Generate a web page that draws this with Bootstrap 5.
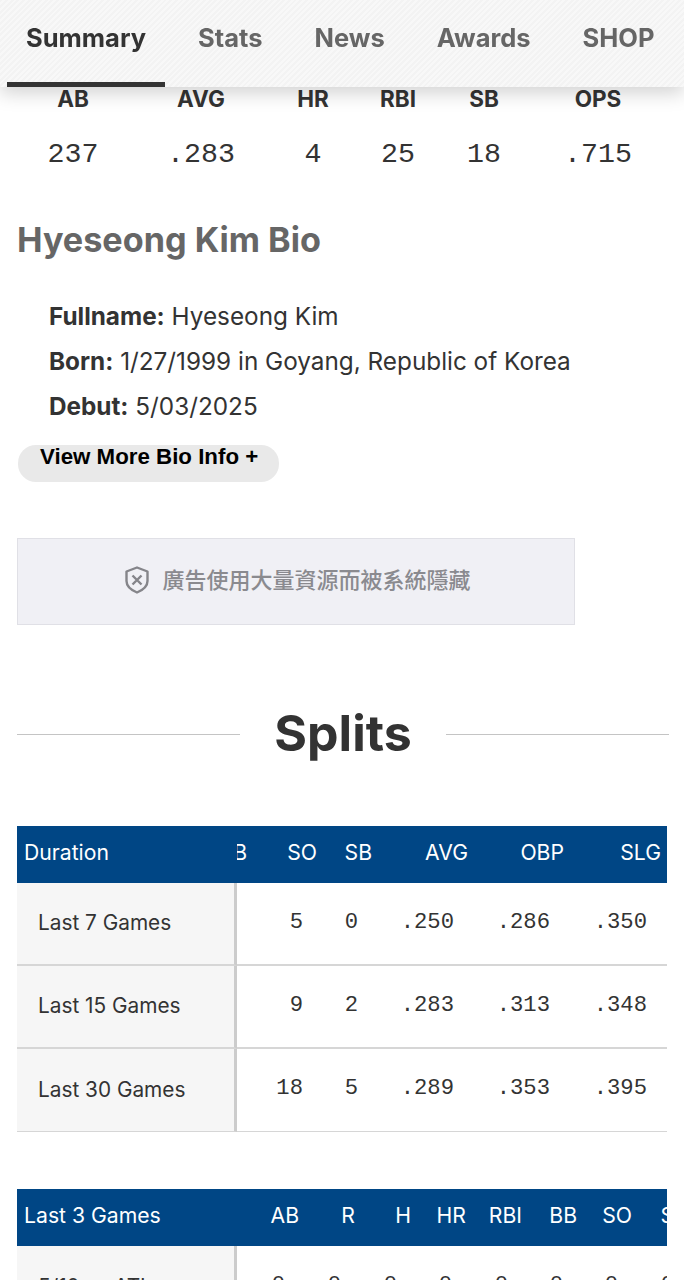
<!DOCTYPE html>
<html lang="en">
<head>
    <meta charset="UTF-8" />
    <meta name="viewport" content="width=device-width, initial-scale=1.0" />
    <title>Hyeseong Kim</title>
    <link href="https://cdn.jsdelivr.net/npm/bootstrap@5.3.3/dist/css/bootstrap.min.css" rel="stylesheet">
    <style>
        body {
            font-family: Inter, "Liberation Sans", sans-serif;
            color: #333;
            background: #fff;
            height: 1280px;
            overflow: hidden;
        }

        .top-tabs {
            position: sticky;
            top: 0;
            z-index: 5;
            height: 87px;
            padding-left: 7px;
            background: repeating-linear-gradient(135deg, #f3f3f3 0 2px, #f8f8f8 2px 4px);
            box-shadow: 0 6px 18px rgba(0, 0, 0, .18);
            overflow: hidden;
        }

        .top-tab {
            display: block;
            height: 87px;
            padding: 22px 19px 0;
            margin-right: 14px;
            font-size: 25.5px;
            line-height: 32px;
            font-weight: 700;
            color: #666;
            text-decoration: none;
            white-space: nowrap;
        }

        .top-tab.on {
            color: #333;
            border-bottom: 5px solid #333;
        }

        .stat-line {
            display: grid;
            grid-template-columns: 146px 110px 114px 56px 116px 112px;
            text-align: center;
        }

        .stat-line .hd {
            font-size: 22.5px;
            line-height: 26px;
            font-weight: 700;
            margin-top: -1px;
        }

        .stat-line .vl {
            font-family: "Liberation Mono", monospace;
            font-size: 28.3px;
            line-height: 32px;
            padding-top: 26px;
        }

        .bio-title {
            font-size: 34.2px;
            line-height: 40px;
            font-weight: 700;
            color: #666;
            margin: 50px 0 0 17px;
        }

        .bio-list {
            margin: 34px 0 0 49px;
            font-size: 24.3px;
            line-height: 45px;
        }

        .more-bio {
            width: 261px;
            height: 37px;
            margin: 16px 0 0 18px;
            padding: 0 0 14px 22px;
            border: 0;
            border-radius: 18px;
            background: #e9e9e9;
            color: #000;
            font-family: "Liberation Sans", sans-serif;
            font-size: 22.3px;
            line-height: 24px;
            font-weight: 700;
            text-align: left;
            display: block;
        }

        .ad-box {
            width: 558px;
            height: 87px;
            margin: 56px 0 0 17px;
            padding: 0 0 4px 4px;
            border: 1px solid #e0e0e6;
            background: #f0f0f5;
            color: #8a8a8f;
            font-family: "Noto Sans CJK TC", sans-serif;
            font-size: 22px;
            font-weight: 500;
            gap: 13px;
        }

        .ad-box span {
            margin-top: -2px;
        }

        .splits-head {
            margin: 72px 15px 0 17px;
            gap: 34px;
            font-size: 50px;
            line-height: 72px;
            font-weight: 700;
        }

        .splits-head hr {
            flex: 1;
            margin: 2px 0 0;
            opacity: 1;
            border-top: 1px solid #c4c4c4;
        }

        .scroll-box {
            margin: 0 17px;
            overflow-x: auto;
            scrollbar-width: none;
        }

        .stat-table {
            table-layout: fixed;
            border-collapse: separate;
            border-spacing: 0;
            font-size: 21.2px;
        }

        .splits-table {
            width: 694px;
        }

        .games-table {
            width: 677px;
        }

        .c220 { width: 220px; }
        .c55 { width: 55px; }
        .c56 { width: 56px; }
        .c60 { width: 60px; }
        .c68 { width: 68px; }
        .c70 { width: 70px; }
        .c96 { width: 96px; }
        .c97 { width: 97px; }

        .stat-table th {
            height: 57px;
            padding: 0 6px 4px 0;
            background: #004685;
            color: #fff;
            font-weight: 400;
            text-align: right;
            white-space: nowrap;
        }

        .stat-table td {
            height: 83px;
            padding: 0 20px 2px 0;
            font-family: "Liberation Mono", monospace;
            font-size: 22.2px;
            text-align: right;
            white-space: nowrap;
            border-bottom: 2px solid #d6d6d6;
        }

        .stat-table tr:last-child td {
            border-bottom-width: 1px;
        }

        .stat-table .fix-col {
            position: sticky;
            left: 0;
            z-index: 2;
            text-align: left;
        }

        .stat-table th.fix-col {
            padding-left: 7px;
        }

        .stat-table td.fix-col {
            padding: 0 0 1px 21px;
            background: #f6f6f6;
            border-right: 3px solid #ccc;
            font-family: Inter, "Liberation Sans", sans-serif;
            font-size: 20.8px;
        }

        .first-table {
            margin-top: 57px;
        }

        .second-table {
            margin-top: 57px;
        }
    </style>
</head>
<body>
    <nav class="top-tabs d-flex">
        <a class="top-tab on" href="#">Summary</a>
        <a class="top-tab" href="#">Stats</a>
        <a class="top-tab" href="#">News</a>
        <a class="top-tab" href="#">Awards</a>
        <a class="top-tab" href="#">SHOP</a>
    </nav>

    <div class="stat-line">
        <div class="hd">AB</div><div class="hd">AVG</div><div class="hd">HR</div><div class="hd">RBI</div><div class="hd">SB</div><div class="hd">OPS</div>
        <div class="vl">237</div><div class="vl">.283</div><div class="vl">4</div><div class="vl">25</div><div class="vl">18</div><div class="vl">.715</div>
    </div>

    <h2 class="bio-title">Hyeseong Kim Bio</h2>
    <div class="bio-list">
        <div><b>Fullname:</b> Hyeseong Kim</div>
        <div><b>Born:</b> 1/27/1999 in Goyang, Republic of Korea</div>
        <div><b>Debut:</b> 5/03/2025</div>
    </div>
    <button class="more-bio">View More Bio Info +</button>

    <div class="ad-box d-flex align-items-center justify-content-center">
        <svg width="24" height="28" viewBox="0 0 24 28" fill="none" stroke="#85858a" stroke-width="2.4" stroke-linejoin="round"><path d="M12 1.5 L22.5 5.5 V15 C22.5 20 18 24 12 26.5 C6 24 1.5 20 1.5 15 V5.5 Z"/><path d="M7.5 9.5 L16.5 18.5 M16.5 9.5 L7.5 18.5"/></svg>
        <span>廣告使用大量資源而被系統隱藏</span>
    </div>

    <div class="splits-head d-flex align-items-center">
        <hr><span>Splits</span><hr>
    </div>

    <div class="scroll-box first-table" id="splitsScroll">
        <table class="stat-table splits-table">
            <colgroup>
                <col class="c220"><col class="c60"><col class="c70"><col class="c55"><col class="c96"><col class="c96"><col class="c97">
            </colgroup>
            <thead>
                <tr><th class="fix-col">Duration</th><th>BB</th><th>SO</th><th>SB</th><th>AVG</th><th>OBP</th><th>SLG</th></tr>
            </thead>
            <tbody>
                <tr><td class="fix-col">Last 7 Games</td><td>1</td><td>5</td><td>0</td><td>.250</td><td>.286</td><td>.350</td></tr>
                <tr><td class="fix-col">Last 15 Games</td><td>1</td><td>9</td><td>2</td><td>.283</td><td>.313</td><td>.348</td></tr>
                <tr><td class="fix-col">Last 30 Games</td><td>6</td><td>18</td><td>5</td><td>.289</td><td>.353</td><td>.395</td></tr>
            </tbody>
        </table>
    </div>

    <div class="scroll-box second-table">
        <table class="stat-table games-table">
            <colgroup>
                <col class="c220"><col class="c68"><col class="c56"><col class="c56"><col class="c55"><col class="c56"><col class="c55"><col class="c55"><col class="c56">
            </colgroup>
            <thead>
                <tr><th class="fix-col">Last 3 Games</th><th>AB</th><th>R</th><th>H</th><th>HR</th><th>RBI</th><th>BB</th><th>SO</th><th>SB</th></tr>
            </thead>
            <tbody>
                <tr><td class="fix-col">5/10 vs ATL</td><td>0</td><td>0</td><td>0</td><td>0</td><td>0</td><td>0</td><td>0</td><td>0</td></tr>
            </tbody>
        </table>
    </div>

    <script>
        const splitsScroll = document.getElementById('splitsScroll');
        splitsScroll.scrollLeft = splitsScroll.scrollWidth;
    </script>
    <script src="https://cdn.jsdelivr.net/npm/bootstrap@5.3.3/dist/js/bootstrap.bundle.min.js"></script>
</body>
</html>
